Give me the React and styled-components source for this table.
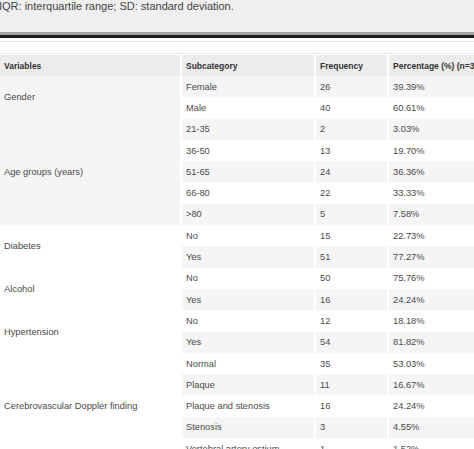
import React from 'react';
import styled, { createGlobalStyle } from 'styled-components';

const GlobalStyle = createGlobalStyle`
  html, body {
    margin: 0;
    padding: 0;
    background: #fff;
    overflow: hidden;
  }
  body {
    font-family: "Liberation Sans", Arial, sans-serif;
  }
`;

const Page = styled.div`
  width: 474px;
  height: 449px;
  overflow: hidden;
`;

const Caption = styled.div`
  height: 32px;
  background: #efefef;
  color: #444;
  font-size: 11px;
  line-height: 12px;
  margin-left: -1px;
  white-space: nowrap;
`;

const DoubleRule = styled.div`
  height: 0;
  border-top: 3px solid #a3a3a3;
  border-bottom: 3px solid #1e1e1e;
`;

const Spacer = styled.div`
  height: 11px;
  margin-top: 3px;
  border-top: 1px solid #e2e2e2;
  border-bottom: 1px solid #ececec;
  margin-bottom: 1px;
`;

const Table = styled.table`
  table-layout: fixed;
  width: 530px;
  border-collapse: separate;
  border-spacing: 0;
`;

const Col = styled.col`
  width: ${(p) => p.$w}px;
`;

const HeadRow = styled.tr`
  height: 21px;
`;

const HeadCell = styled.th`
  background: #ececec;
  color: #333;
  font-size: 8.5px;
  font-weight: bold;
  text-align: left;
  padding: 0 4px;
  white-space: nowrap;
  overflow: hidden;
  border-left: ${(p) => (p.$first ? '0' : '2px solid #fff')};
`;

const Row = styled.tr`
  height: 21.3px;
`;

const Cell = styled.td`
  background: ${(p) => (p.$shade ? '#f5f5f5' : '#fff')};
  color: #4a4a4a;
  font-size: 9.3px;
  padding: 0 4px;
  white-space: nowrap;
  overflow: hidden;
  vertical-align: middle;
  border-left: ${(p) => (p.$first ? '0' : '2px solid #fff')};
`;

const groups = [
  {
    name: 'Gender',
    items: [
      ['Female', 26, '39.39%'],
      ['Male', 40, '60.61%'],
    ],
  },
  {
    name: 'Age groups (years)',
    items: [
      ['21-35', 2, '3.03%'],
      ['36-50', 13, '19.70%'],
      ['51-65', 24, '36.36%'],
      ['66-80', 22, '33.33%'],
      ['>80', 5, '7.58%'],
    ],
  },
  {
    name: 'Diabetes',
    items: [
      ['No', 15, '22.73%'],
      ['Yes', 51, '77.27%'],
    ],
  },
  {
    name: 'Alcohol',
    items: [
      ['No', 50, '75.76%'],
      ['Yes', 16, '24.24%'],
    ],
  },
  {
    name: 'Hypertension',
    items: [
      ['No', 12, '18.18%'],
      ['Yes', 54, '81.82%'],
    ],
  },
  {
    name: 'Cerebrovascular Doppler finding',
    items: [
      ['Normal', 35, '53.03%'],
      ['Plaque', 11, '16.67%'],
      ['Plaque and stenosis', 16, '24.24%'],
      ['Stenosis', 3, '4.55%'],
      ['Vertebral artery ostium', 1, '1.52%'],
    ],
  },
];

const App = () => {
  let index = 0;
  const rows = [];
  groups.forEach((group) => {
    group.items.forEach(([sub, freq, pct], i) => {
      index += 1;
      const shade = index % 2 === 1;
      rows.push(
        <Row key={`${group.name}-${sub}`}>
          {i === 0 && (
            <Cell $first $shade={shade} rowSpan={group.items.length}>
              {group.name}
            </Cell>
          )}
          <Cell $shade={shade}>{sub}</Cell>
          <Cell $shade={shade}>{freq}</Cell>
          <Cell $shade={shade}>{pct}</Cell>
        </Row>
      );
    });
  });

  return (
    <Page>
      <GlobalStyle />
      <Caption>IQR: interquartile range; SD: standard deviation.</Caption>
      <DoubleRule />
      <Spacer />
      <Table>
        <colgroup>
          <Col $w={180} />
          <Col $w={134} />
          <Col $w={73} />
          <Col $w={143} />
        </colgroup>
        <thead>
          <HeadRow>
            <HeadCell $first>Variables</HeadCell>
            <HeadCell>Subcategory</HeadCell>
            <HeadCell>Frequency</HeadCell>
            <HeadCell>Percentage (%) (n=34)</HeadCell>
          </HeadRow>
        </thead>
        <tbody>{rows}</tbody>
      </Table>
    </Page>
  );
};

export default App;
